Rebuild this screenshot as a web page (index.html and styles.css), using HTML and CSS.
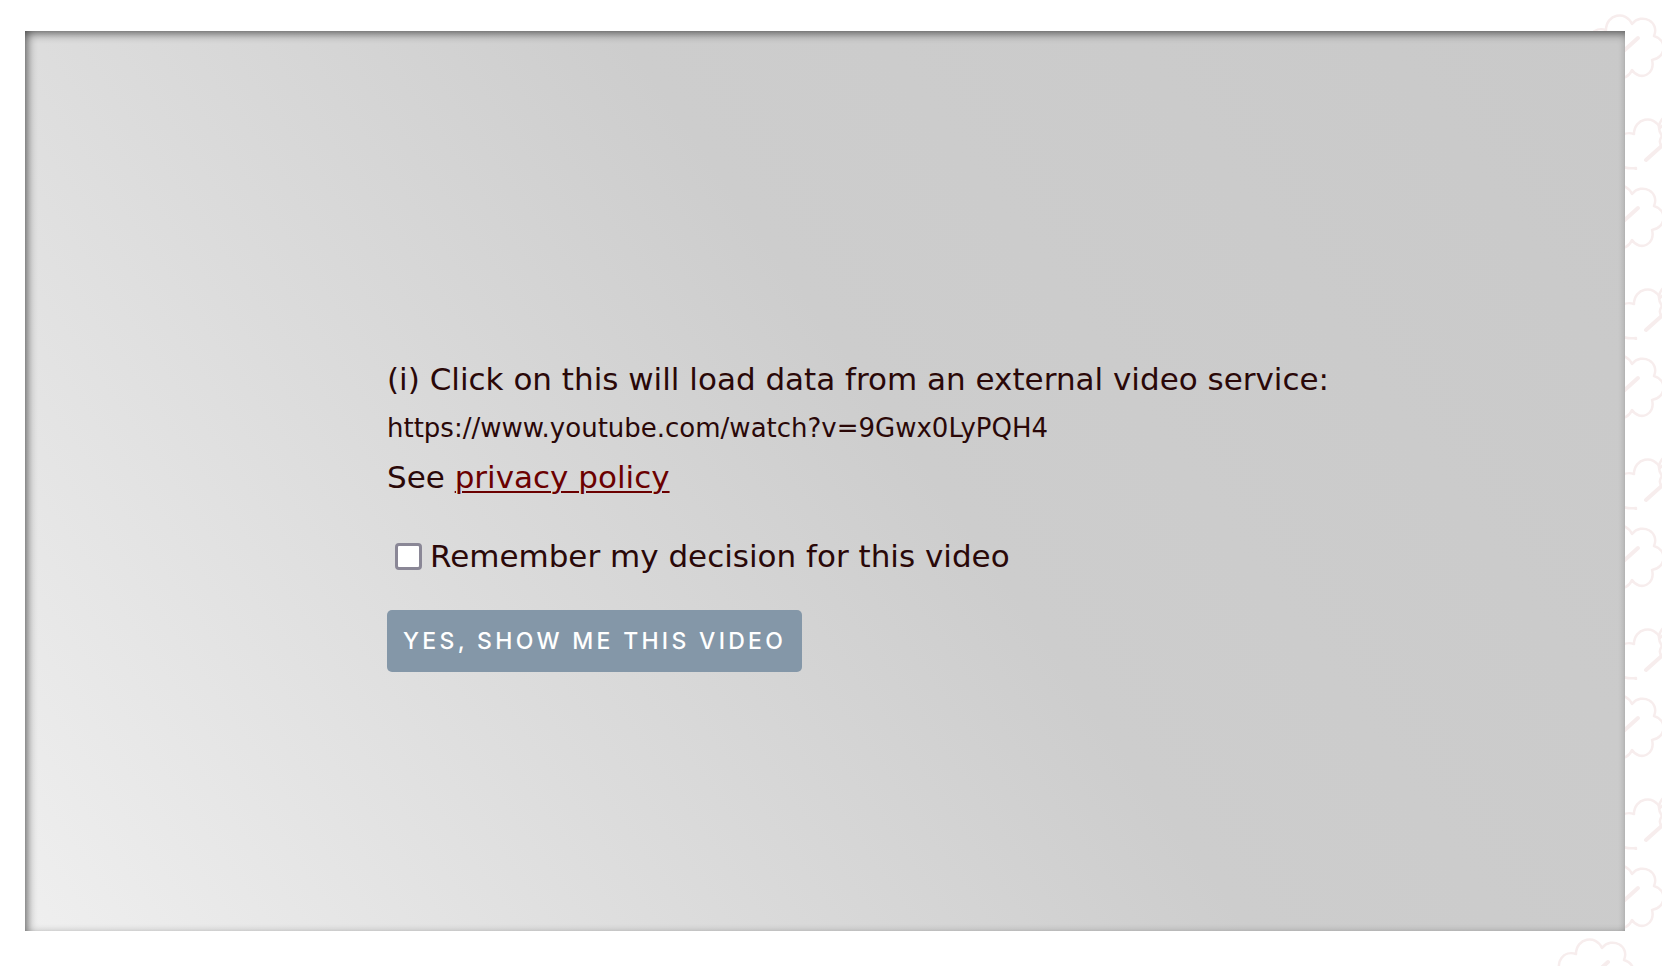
FILE: index.html
```html
<!DOCTYPE html>
<html lang="en">
<head>
<meta charset="utf-8">
<title>External video</title>
<link rel="stylesheet" href="styles.css">
</head>
<body>
<svg class="deco" width="180" height="966" viewBox="0 0 180 966" aria-hidden="true">
  <defs>
    <g id="flower" fill="none" stroke="#f7eded" stroke-width="2.5" stroke-linejoin="round">
      <path d="M8 44 C0 32 10 20 22 24 C22 8 42 4 48 18 C58 6 76 16 70 30 C84 34 82 52 68 54 C72 68 56 76 48 64 C42 78 22 74 24 58 C10 60 2 52 8 44 Z"/>
      <path d="M34 50 L54 32" stroke-width="4" stroke-linecap="round"/>
    </g>
    <pattern id="pat" x="0" y="0" width="180" height="170" patternUnits="userSpaceOnUse">
      <use href="#flower" x="102" y="6"/>
      <use href="#flower" x="172" y="92"/>
      <use href="#flower" x="130" y="110"/>
    </pattern>
  </defs>
  <rect width="180" height="966" fill="url(#pat)"/>
  <use href="#flower" x="72" y="930"/>
</svg>
<div class="page">
  <div class="consent">
    <div class="content">
      <p class="line notice">(i) Click on this will load data from an external video service:</p>
      <p class="line url">https://www.youtube.com/watch?v=9Gwx0LyPQH4</p>
      <p class="line notice">See <a class="link" href="#">privacy policy</a></p>
      <label class="remember"><span class="box"></span><span>Remember my decision for this video</span></label>
      <button class="show" type="button">Yes, show me this video</button>
    </div>
  </div>
</div>
</body>
</html>
```
FILE: styles.css
```css
html, body {
  margin: 0;
  padding: 0;
  background: #ffffff;
}
body {
  position: relative;
  width: 1662px;
  height: 966px;
  overflow: hidden;
  font-family: "DejaVu Sans", Verdana, sans-serif;
  color: #2a0808;
}
.deco {
  position: absolute;
  right: 0;
  top: 0;
  z-index: 0;
}
.page {
  position: relative;
  z-index: 1;
  padding: 31px 0 0 25px;
}
.consent {
  width: 1600px;
  height: 900px;
  box-sizing: border-box;
  background: linear-gradient(55deg, #efefef 0%, #dcdcdc 30%, #cdcdcd 55%, #c9c9c9 100%);
  box-shadow: inset 6px 0 10px -3px rgba(0, 0, 0, 0.45), inset 0 6px 10px -3px rgba(0, 0, 0, 0.45);
  padding: 324px 0 0 362px;
}
.content {
  display: flex;
  flex-direction: column;
  align-items: flex-start;
}
.line {
  margin: 0;
  line-height: 48px;
}
.notice {
  font-size: 31px;
}
.url {
  font-size: 26px;
  line-height: 50px;
}
.link {
  color: #6b0000;
  text-decoration: underline;
  text-underline-offset: 3px;
  text-decoration-thickness: 2px;
}
.remember {
  display: flex;
  align-items: center;
  gap: 8px;
  margin-top: 31px;
  font-size: 31px;
  line-height: 48px;
}
.box {
  display: block;
  width: 21px;
  height: 21px;
  margin-left: 8px;
  background: #ffffff;
  border: 3px solid #8a8796;
  border-radius: 4px;
}
.show {
  margin-top: 30px;
  height: 62px;
  padding: 0 16px 0 16px;
  border: none;
  border-radius: 5px;
  background: #8497a8;
  color: #ffffff;
  font-family: Inter, "Liberation Sans", Arial, sans-serif;
  font-size: 23px;
  font-weight: 500;
  letter-spacing: 3.3px;
  text-transform: uppercase;
}
```
